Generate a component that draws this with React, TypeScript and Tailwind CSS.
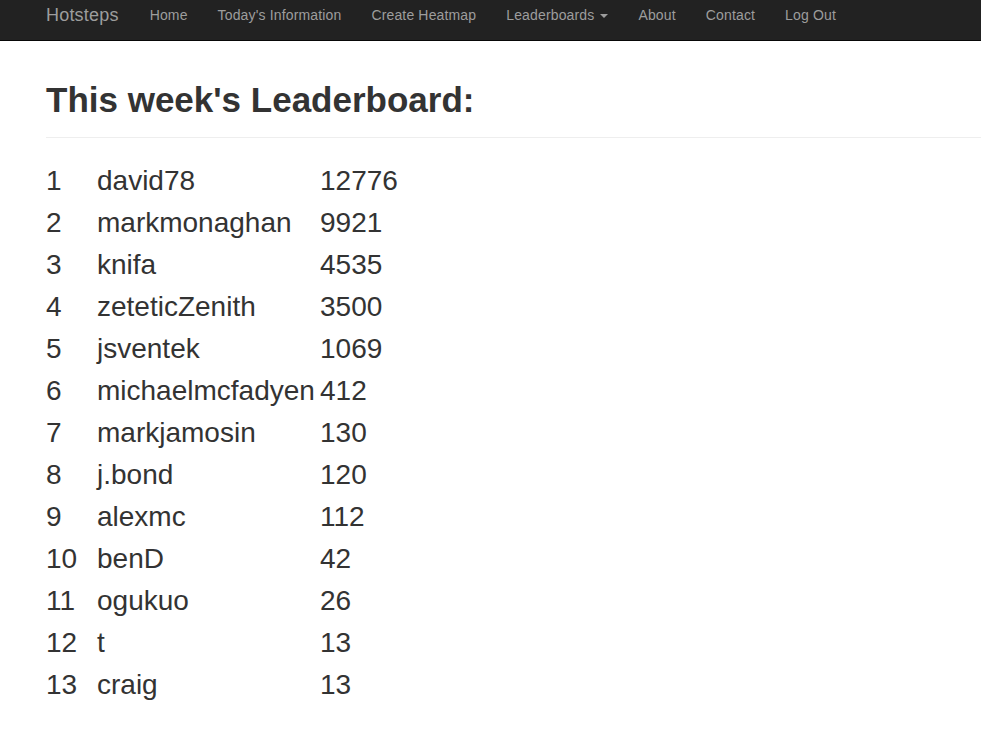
import React from "react";

const rows: [number, string, number][] = [
  [1, "david78", 12776],
  [2, "markmonaghan", 9921],
  [3, "knifa", 4535],
  [4, "zeteticZenith", 3500],
  [5, "jsventek", 1069],
  [6, "michaelmcfadyen", 412],
  [7, "markjamosin", 130],
  [8, "j.bond", 120],
  [9, "alexmc", 112],
  [10, "benD", 42],
  [11, "ogukuo", 26],
  [12, "t", 13],
  [13, "craig", 13],
];

const links = ["Home", "Today's Information", "Create Heatmap"];
const links2 = ["About", "Contact", "Log Out"];

export default function App() {
  return (
    <div
      className="min-h-[729px] bg-white text-[#333]"
      style={{ fontFamily: '"Liberation Sans", Arial, sans-serif' }}
    >
      <nav className="h-[41px] bg-[#222] border-b border-[#080808] flex items-start pl-[46px]">
        <div className="h-[30px] flex items-center text-[18px] tracking-[0.2px] text-[#9d9d9d] mr-[16px]">Hotsteps</div>
        <ul className="flex">
          {links.map((l) => (
            <li key={l} className="h-[30px] flex items-center px-[15px] text-[14px] tracking-[0.15px] text-[#9d9d9d]">
              {l}
            </li>
          ))}
          <li className="h-[30px] flex items-center px-[15px] text-[14px] tracking-[0.15px] text-[#9d9d9d]">
            Leaderboards
            <span className="ml-[6px] mt-[2px] w-0 h-0 border-l-[4px] border-r-[4px] border-t-[4px] border-l-transparent border-r-transparent border-t-[#9d9d9d]" />
          </li>
          {links2.map((l) => (
            <li key={l} className="h-[30px] flex items-center px-[15px] text-[14px] tracking-[0.15px] text-[#9d9d9d]">
              {l}
            </li>
          ))}
        </ul>
      </nav>
      <div className="pl-[46px]">
        <div className="pt-[39px] pb-[17px] border-b border-[#eee]">
          <h1 className="text-[35px] leading-[40px] font-bold">This week's Leaderboard:</h1>
        </div>
        <table className="mt-[22px] text-[28px] leading-[42px] border-collapse">
          <tbody>
            {rows.map(([r, n, s]) => (
              <tr key={r}>
                <td className="w-[51px] p-0 align-top">{r}</td>
                <td className="w-[223px] p-0 align-top">{n}</td>
                <td className="p-0 align-top">{s}</td>
              </tr>
            ))}
          </tbody>
        </table>
      </div>
    </div>
  );
}
